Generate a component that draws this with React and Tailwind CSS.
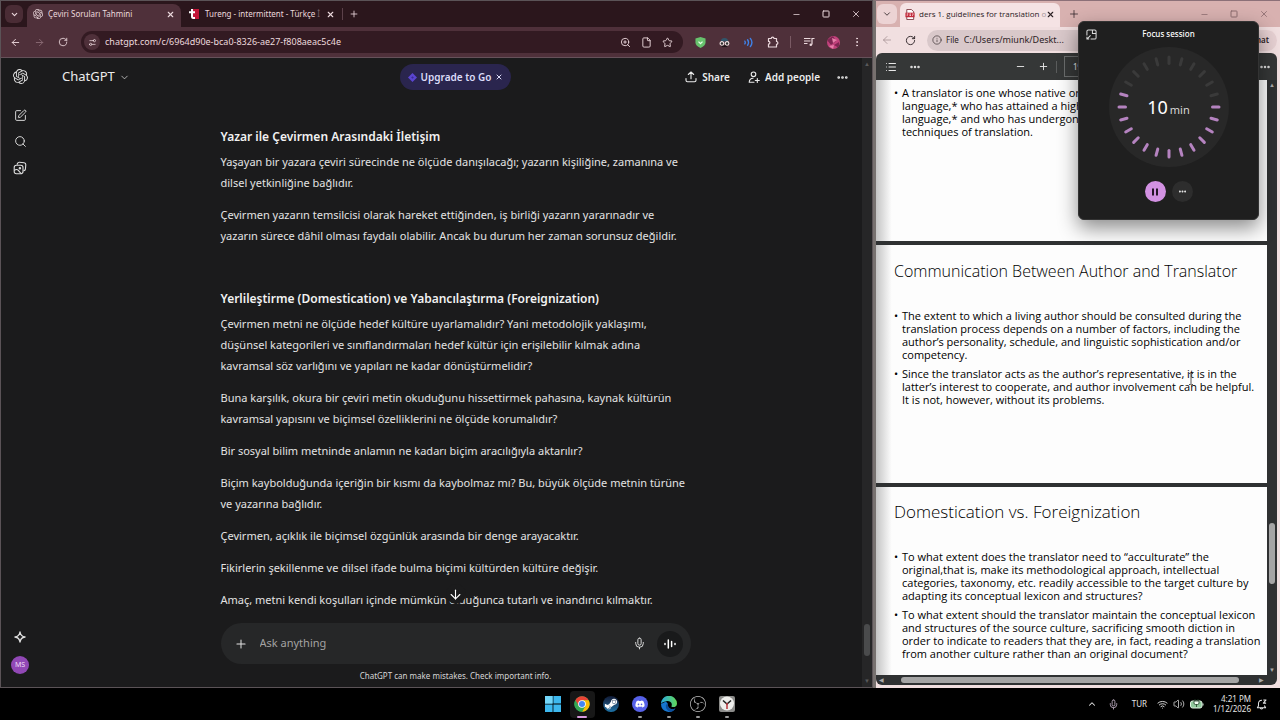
import React, { useState } from 'react';
import {
    ArrowDown, ArrowLeft, ArrowRight, ChevronDown, ChevronUp, Ellipsis, EllipsisVertical,
    File, Info, List, ListMusic, Mic, Minus, Plus, RotateCw, Search, Settings2, SquarePen, Square,
    Star, Volume2, Wifi, X, ZoomIn,
} from 'lucide-react';
import { SiOpenai, SiObsstudio } from 'react-icons/si';
import { FaDiscord, FaSteamSymbol } from 'react-icons/fa';

const sections = [
    {
        title: 'Yazar ile Çevirmen Arasındaki İletişim',
        paragraphs: [
            ['Yaşayan bir yazara çeviri sürecinde ne ölçüde danışılacağı; yazarın kişiliğine, zamanına ve', 'dilsel yetkinliğine bağlıdır.'],
            ['Çevirmen yazarın temsilcisi olarak hareket ettiğinden, iş birliği yazarın yararınadır ve', 'yazarın sürece dâhil olması faydalı olabilir. Ancak bu durum her zaman sorunsuz değildir.'],
        ],
    },
    {
        title: 'Yerlileştirme (Domestication) ve Yabancılaştırma (Foreignization)',
        paragraphs: [
            ['Çevirmen metni ne ölçüde hedef kültüre uyarlamalıdır? Yani metodolojik yaklaşımı,', 'düşünsel kategorileri ve sınıflandırmaları hedef kültür için erişilebilir kılmak adına', 'kavramsal söz varlığını ve yapıları ne kadar dönüştürmelidir?'],
            ['Buna karşılık, okura bir çeviri metin okuduğunu hissettirmek pahasına, kaynak kültürün', 'kavramsal yapısını ve biçimsel özelliklerini ne ölçüde korumalıdır?'],
            ['Bir sosyal bilim metninde anlamın ne kadarı biçim aracılığıyla aktarılır?'],
            ['Biçim kaybolduğunda içeriğin bir kısmı da kaybolmaz mı? Bu, büyük ölçüde metnin türüne', 've yazarına bağlıdır.'],
            ['Çevirmen, açıklık ile biçimsel özgünlük arasında bir denge arayacaktır.'],
            ['Fikirlerin şekillenme ve dilsel ifade bulma biçimi kültürden kültüre değişir.'],
            ['Amaç, metni kendi koşulları içinde mümkün olduğunca tutarlı ve inandırıcı kılmaktır.'],
        ],
    },
];

const slideOne = [
    ['A translator is one whose native or', 'language,* who has attained a high', 'language,* and who has undergone', 'techniques of translation.'],
];

const slideTwo = [
    ['The extent to which a living author should be consulted during the', 'translation process depends on a number of factors, including the', 'author’s personality, schedule, and linguistic sophistication and/or', 'competency.'],
    ['Since the translator acts as the author’s representative, it is in the', 'latter’s interest to cooperate, and author involvement can be helpful.', 'It is not, however, without its problems.'],
];

const slideThree = [
    ['To what extent does the translator need to “acculturate” the', 'original,that is, make its methodological approach, intellectual', 'categories, taxonomy, etc. readily accessible to the target culture by', 'adapting its conceptual lexicon and structures?'],
    ['To what extent should the translator maintain the conceptual lexicon', 'and structures of the source culture, sacrificing smooth diction in', 'order to indicate to readers that they are, in fact, reading a translation', 'from another culture rather than an original document?'],
];

function Lines({ lines }) {
    return lines.map((line, i) => (
        <React.Fragment key={i}>
            {i > 0 && <br />}
            {line}
        </React.Fragment>
    ));
}

function IconButton({ label, className = '', onClick, children }) {
    return (
        <button type="button" aria-label={label} onClick={onClick} className={`flex shrink-0 items-center justify-center ${className}`}>
            {children}
        </button>
    );
}

function WindowButtons({ className }) {
    return (
        <div className={`flex items-center gap-5 ${className}`}>
            <IconButton label="Minimize" className="w-[10px]"><Minus size={9} /></IconButton>
            <IconButton label="Maximize" className="w-[10px]"><Square size={8} strokeWidth={3} /></IconButton>
            <IconButton label="Close" className="w-[10px]"><X size={10} /></IconButton>
        </div>
    );
}

function ChromeTabs() {
    return (
        <div className="flex h-[26px] shrink-0 items-center bg-[#2b161c] pr-[11px] pl-1 text-[#ecd9dd]">
            <IconButton label="Search tabs" className="mr-1 size-[18px] rounded-md bg-[#4a2c35]"><ChevronDown size={9} strokeWidth={3} /></IconButton>
            <div className="mt-[3px] flex h-[23px] w-[154px] items-center rounded-t-lg bg-[#4f303a] px-1.5 pb-[3px]">
                <SiOpenai size={10} className="shrink-0" />
                <span className="ml-[5px] flex-1 text-[8px] whitespace-nowrap">Çeviri Soruları Tahmini</span>
                <IconButton label="Close tab"><X size={9} strokeWidth={3} /></IconButton>
            </div>
            <div className="flex w-[154px] items-center pl-2">
                <svg viewBox="0 0 10 10" className="size-[10px] shrink-0">
                    <rect x="3" width="7" height="10" fill="#c21638" />
                    <path d="M3 0v7.500q0 1.500 1.500 1.500H6M0 3.200h6" stroke="#fff" strokeWidth="2" fill="none" />
                </svg>
                <span className="ml-[6px] flex-1 text-[8px] whitespace-nowrap">Tureng - intermittent - Türkçe <span className="text-[#7a6067]">İ</span></span>
                <IconButton label="Close tab"><X size={9} strokeWidth={3} /></IconButton>
            </div>
            <span className="ml-[7px] h-3 w-px bg-[#5c414a]" />
            <IconButton label="New tab" className="ml-[6px]"><Plus size={10} /></IconButton>
            <WindowButtons className="ml-auto" />
        </div>
    );
}

function ChromeToolbar() {
    return (
        <div className="flex h-[31px] shrink-0 items-center border-b border-[#66515a] bg-[#4f303a] pr-[9px] pl-[9px] text-[#ecd9dd]">
            <IconButton label="Back"><ArrowLeft size={11} /></IconButton>
            <IconButton label="Forward" className="ml-[13px] text-[#8a6a74]"><ArrowRight size={11} /></IconButton>
            <IconButton label="Reload" className="ml-[13px]"><RotateCw size={10} /></IconButton>
            <div className="ml-[13px] flex h-[22px] flex-1 items-center rounded-full bg-[#331a22] pr-[10px] pl-[3px]">
                <IconButton label="Site information" className="size-4 rounded-full bg-[#4f303a]"><Settings2 size={9} className="-scale-x-100" /></IconButton>
                <input aria-label="Address" className="ml-[5px] min-w-0 flex-1 text-[9px] outline-none" defaultValue="chatgpt.com/c/6964d90e-bca0-8326-ae27-f808aeac5c4e" />
                <div className="flex items-center gap-[10px]">
                    <IconButton label="Zoom"><ZoomIn size={11} /></IconButton>
                    <IconButton label="Page"><File size={11} /></IconButton>
                    <IconButton label="Bookmark"><Star size={11} /></IconButton>
                </div>
            </div>
            <div className="ml-3 flex items-center gap-[13px]">
                <IconButton label="Shield" className="w-[11px]">
                    <svg viewBox="0 0 12 12" className="size-[11px]">
                        <path d="M6 0 11.500 1.500V6q0 3.500-5.500 6Q.5 9.500.5 6V1.500z" fill="#67c26d" />
                        <path d="m3.800 5 2.200 2.200L8.200 5" stroke="#eaffea" strokeWidth="1.400" fill="none" />
                    </svg>
                </IconButton>
                <IconButton label="Glasses" className="w-[11px]">
                    <svg viewBox="0 0 12 12" className="size-[11px]">
                        <path d="M2 5q0-4 4-4t4 4z" fill="#31566b" />
                        <path d="M3 9h6v2H3z" fill="#201418" />
                        <g fill="#333" stroke="#f1e3e3" strokeWidth="1.200"><circle cx="3.200" cy="7" r="2" /><circle cx="8.800" cy="7" r="2" /></g>
                    </svg>
                </IconButton>
                <IconButton label="Read aloud" className="w-[11px]">
                    <svg viewBox="0 0 12 12" className="size-[11px]" fill="none" stroke="#3f82e8" strokeWidth="1.500" strokeLinecap="round">
                        <path d="M2 4.500q1 1.500 0 3M5 3q2 3 0 6M8 1.500q3.500 4.500 0 9" />
                    </svg>
                </IconButton>
                <IconButton label="Extensions" className="w-[12px]">
                    <svg viewBox="0 0 12 12" className="size-[12px]" fill="none" stroke="currentColor" strokeWidth="1.200" strokeLinejoin="round">
                        <path d="M1.500 2.500h2.700a1.400 1.400 0 0 1 2.800 0h2.500v3a1.400 1.400 0 0 1 0 2.800v2.700h-8V8.200a1.400 1.400 0 0 0 0-2.800z" />
                    </svg>
                </IconButton>
            </div>
            <span className="ml-[11px] h-3 w-px bg-[#7a5a64]" />
            <IconButton label="Media" className="ml-[12px]">
                <svg viewBox="0 0 12 12" className="size-[12px]" fill="none" stroke="currentColor" strokeWidth="1.200">
                    <path d="M1 2.500h6.500M1 5h6.500M1 7.500h3.500M9 8.500v-6h2.500" />
                    <circle cx="7.800" cy="8.700" r="1.300" fill="currentColor" stroke="none" />
                </svg>
            </IconButton>
            <IconButton label="Profile" className="ml-3 size-[13px] overflow-hidden rounded-full bg-[#c2427c]">
                <svg viewBox="0 0 13 13"><path d="M0 4 6 0l3 5-5 4zM7 9l5-3v6z" fill="#7f2552" /><path d="m5 2 5 2-4 3zM2 10l5-1-1 4z" fill="#e77fa9" /></svg>
            </IconButton>
            <IconButton label="Menu" className="ml-[11px]"><EllipsisVertical size={12} /></IconButton>
        </div>
    );
}

function Sidebar() {
    return (
        <nav className="flex w-[38px] shrink-0 flex-col items-center text-[#dedede]">
            <a href="#home" aria-label="ChatGPT" className="mt-[11px] flex size-[15px] items-center justify-center"><SiOpenai size={15} /></a>
            <div className="mt-[25px] flex flex-col items-center gap-[13px]">
                <IconButton label="New chat"><SquarePen size={13} strokeWidth={1.75} /></IconButton>
                <IconButton label="Search chats"><Search size={13} strokeWidth={1.75} /></IconButton>
                <IconButton label="Library">
                    <svg viewBox="0 0 14 14" className="size-[14px]" fill="none" stroke="currentColor" strokeWidth="1.100" strokeLinecap="round" strokeLinejoin="round">
                        <path d="M4.200 3.300 4.500 2.500Q5 1.200 6.400 1.300l4.700.5Q12.900 2 12.800 3.700l-.4 4.500q-.2 1.400-1.600 1.600" />
                        <rect x="1.200" y="4.200" width="8.800" height="8.600" rx="2.200" />
                        <path d="M1.500 9.200q2.500-1.800 4.300.7 1.200 1.700 2.500 2.700" />
                        <circle cx="6.900" cy="7.200" r=".7" />
                    </svg>
                </IconButton>
            </div>
            <div className="mt-auto mb-[13px] flex flex-col items-center gap-[13px]">
                <IconButton label="Upgrade plan">
                    <svg viewBox="0 0 12 12" className="size-[12px]" fill="none" stroke="currentColor" strokeWidth="1.400" strokeLinejoin="round">
                        <path d="M6 1q.6 4.400 5 5-4.400.6-5 5-.6-4.400-5-5 4.400-.6 5-5z" />
                    </svg>
                </IconButton>
                <button type="button" className="size-[18px] rounded-full bg-[#9148b5] text-[7px] text-[#f0ddf7]">MS</button>
            </div>
        </nav>
    );
}

function ChatHeader() {
    return (
        <header className="grid h-[38px] shrink-0 grid-cols-[1fr_auto_1fr] items-center px-[23px] font-semibold text-[#ececec]">
            <button type="button" className="flex items-center gap-1 justify-self-start text-[13px] font-normal">
                ChatGPT <ChevronDown size={11} strokeWidth={1.5} />
            </button>
            <div className="flex h-[26px] items-center gap-1 rounded-full bg-[#2a254e] px-2 text-[10px] text-[#dcdcf8]">
                <svg viewBox="0 0 10 10" className="size-[9px]"><path d="M5 0 10 5 5 10 0 5z" fill="#5b45d1" /><path d="m5 3.500 1.500 1.500L5 6.500 3.500 5z" fill="#3a2c96" /></svg>
                <button type="button">Upgrade to Go</button>
                <IconButton label="Dismiss"><X size={8} strokeWidth={3} /></IconButton>
            </div>
            <div className="flex items-center justify-self-end text-[10px]">
                <button type="button" className="flex items-center gap-[5px]">
                    <svg viewBox="0 0 12 12" className="size-[12px]" fill="none" stroke="currentColor" strokeWidth="1.100" strokeLinecap="round" strokeLinejoin="round">
                        <path d="M6 7.800V1M3.300 3.500 6 1l2.700 2.500M1 7.500v1.800q0 1.500 1.500 1.500h7q1.500 0 1.500-1.500V7.500" />
                    </svg>
                    Share
                </button>
                <button type="button" className="ml-[18px] flex items-center gap-[5px]">
                    <svg viewBox="0 0 12 12" className="size-[12px]" fill="none" stroke="currentColor" strokeWidth="1.100" strokeLinecap="round">
                        <circle cx="5.500" cy="3.300" r="2.300" />
                        <path d="M1.200 11.200Q1.500 7.500 5 7.300M1.200 11.200H6M9.300 7.500v4M7.300 9.500h4" />
                    </svg>
                    Add people
                </button>
                <IconButton label="More" className="ml-4"><Ellipsis size={13} strokeWidth={3} /></IconButton>
            </div>
        </header>
    );
}

function Composer() {
    return (
        <div className="shrink-0 text-center">
            <div className="mx-auto flex h-[41px] w-full max-w-[470px] items-center rounded-full bg-[#262728] pr-[8px] pl-[13px] text-[#e4e4e4]">
                <IconButton label="Attach"><Plus size={14} strokeWidth={1.75} /></IconButton>
                <input aria-label="Message" placeholder="Ask anything" className="ml-[12px] min-w-0 flex-1 text-[11px] outline-none placeholder:text-[#a3a3a3]" />
                <IconButton label="Dictate"><Mic size={13} strokeWidth={1.75} /></IconButton>
                <IconButton label="Voice mode" className="ml-[11px] size-[26px] rounded-full bg-[#191a1b]">
                    <svg viewBox="0 0 12 12" className="size-[12px]" stroke="#fff" strokeWidth="1.500" strokeLinecap="round">
                        <path d="M1 5.500v1M4.300 2v8M7.600 3.500v5M11 5.500v1" />
                    </svg>
                </IconButton>
            </div>
            <p className="h-[23px] text-[8px] leading-[23px] text-[#d6d6d6]">ChatGPT can make mistakes. Check important info.</p>
        </div>
    );
}

function ChatWindow() {
    return (
        <section className="flex min-w-0 flex-col overflow-hidden border border-[#5b5357] bg-[#1b1b1c] font-['Noto_Sans',sans-serif]">
            <ChromeTabs />
            <ChromeToolbar />
            <div className="relative flex min-h-0 flex-1">
                <Sidebar />
                <main className="flex min-w-0 flex-1 flex-col">
                    <ChatHeader />
                    <div className="relative min-h-0 flex-1 overflow-hidden">
                        <article className="mx-auto flex max-w-[470px] flex-col pt-[30px] text-[11px] leading-[21px] whitespace-nowrap text-[#e3e3e3]">
                            {sections.map((section) => (
                                <section key={section.title} className="mb-[42px]">
                                    <h3 className="mb-[4px] text-[12px] font-semibold text-[#f1f1f1]">{section.title}</h3>
                                    <div className="flex flex-col gap-[11px]">
                                        {section.paragraphs.map((p) => <p key={p[0]}><Lines lines={p} /></p>)}
                                    </div>
                                </section>
                            ))}
                        </article>
                        <button type="button" aria-label="Scroll to bottom" className="absolute bottom-[19px] left-1/2 flex size-[20px] -translate-x-1/2 items-center justify-center rounded-full bg-[#1b1b1c] text-white">
                            <ArrowDown size={15} strokeWidth={1.75} />
                        </button>
                    </div>
                    <Composer />
                </main>
                <div className="absolute inset-y-0 right-0 flex w-[10px] flex-col items-center bg-[#262627] py-[3px] text-[6px] leading-[6px] text-[#59595a]">
                    <span>▲</span>
                    <span className="mt-auto mb-[22px] h-8 w-[6px] rounded-full bg-[#4a4b4c]" />
                    <span>▼</span>
                </div>
            </div>
        </section>
    );
}

function Slide({ title, items, titleSize = 'text-[16px]', className }) {
    return (
        <article className={`bg-linear-to-r from-[#c4c4c4] via-[#fdfdfd] via-4% to-[#fdfdfd] pl-[18px] whitespace-nowrap text-black ${className}`}>
            {title && <h2 className={`mb-[28px] leading-5 font-light ${titleSize}`}>{title}</h2>}
            <ul className="flex flex-col gap-[6px] text-[11px] leading-[13px]">
                {items.map((lines) => (
                    <li key={lines[0]} className="flex">
                        <span className="w-2 shrink-0">•</span>
                        <span><Lines lines={lines} /></span>
                    </li>
                ))}
            </ul>
        </article>
    );
}

function PdfWindow() {
    return (
        <section className="flex min-w-0 flex-col border-t border-t-[#8c7078] border-l-[3px] border-l-[#77716f] bg-[#f1dfe0] pr-[3px] pb-[3px] font-['Noto_Sans',sans-serif] text-[#2c2225]">
            <div className="-mr-[3px] flex h-[26px] shrink-0 items-center bg-[#d8b1b0] pr-[11px]">
                <IconButton label="Tab actions" className="ml-px size-[20px] rounded-md bg-[#ecd3d4]"><ChevronDown size={10} /></IconButton>
                <div className="mt-[2px] ml-[3px] flex h-6 w-[160px] items-center rounded-t-md bg-[#f5e3e4] px-[5px] pb-[2px]">
                    <svg viewBox="0 0 10 12" className="h-[11px] w-[10px] shrink-0">
                        <path d="M1.500.5h5l2.500 2.500v8.500H1.500z" fill="#fff" stroke="#7d3b43" />
                        <rect y="4" width="10" height="5" fill="#c32b3c" />
                        <path d="M1.500 5.500h1.500M4.500 5.500h1.500M7.500 5.500H9M1.500 7h.8M4.500 7h1.500M7.500 7h.8" stroke="#fff" />
                    </svg>
                    <span className="ml-1 flex-1 font-['Open_Sans',sans-serif] text-[8px] whitespace-nowrap">ders 1. guidelines for translation <span className="text-[#a79799]">o</span></span>
                    <IconButton label="Close tab"><X size={9} strokeWidth={3} /></IconButton>
                </div>
                <IconButton label="New tab" className="ml-2"><Plus size={12} strokeWidth={1.5} /></IconButton>
                <WindowButtons className="ml-auto text-[#8c6c6f]" />
            </div>
            <div className="flex h-[26px] shrink-0 items-center pl-[5px]">
                <IconButton label="Back" className="text-[#a08c8f]"><ArrowLeft size={12} strokeWidth={1.5} /></IconButton>
                <IconButton label="Refresh" className="ml-3"><RotateCw size={11} /></IconButton>
                <div className="ml-[11px] flex h-[21px] flex-1 items-center rounded-full bg-[#d9c8ca] pl-[5px] text-[9px]">
                    <Info size={10} strokeWidth={1.5} />
                    <span className="ml-1 text-[8px]">File</span>
                    <input aria-label="Address" className="ml-[5px] min-w-0 flex-1 outline-none" defaultValue="C:/Users/miunk/Deskt..." />
                </div>
                <button type="button" className="ml-2 flex h-[21px] items-center rounded-full bg-[#e6d0d2] px-2 text-[8px] font-semibold">Chat</button>
            </div>
            <div className="flex h-[27px] shrink-0 items-center rounded-t-md bg-[#353737] pl-[9px] text-[#e8e8e8]">
                <IconButton label="Contents"><List size={12} /></IconButton>
                <IconButton label="Draw" className="ml-3"><Ellipsis size={12} strokeWidth={3} /></IconButton>
                <IconButton label="Zoom out" className="ml-[94px]"><Minus size={11} /></IconButton>
                <IconButton label="Zoom in" className="ml-[12px]"><Plus size={11} /></IconButton>
                <span className="mx-[7px] h-3 w-px bg-[#5b5d5d]" />
                <input aria-label="Page" className="mr-1 h-[21px] w-8 border border-[#6a6c6c] pl-2 text-[8px]" defaultValue="19" />
                <IconButton label="More" className="mr-[6px] ml-auto"><Ellipsis size={12} strokeWidth={3} /></IconButton>
            </div>
            <div className="flex min-h-0 flex-1 overflow-hidden bg-[#2f3132]">
                <div className="flex min-w-0 flex-1 flex-col gap-[4px] overflow-hidden font-['Open_Sans',sans-serif]">
                    <Slide items={slideOne} className="h-[161px] shrink-0 pt-[6px]" />
                    <Slide title="Communication Between Author and Translator" items={slideTwo} className="h-[238px] shrink-0 pt-[16px]" />
                    <Slide title="Domestication vs. Foreignization" titleSize="text-[17px]" items={slideThree} className="flex-1 pt-[15px]" />
                </div>
                <div className="flex w-[10px] flex-col items-center py-[2px] text-[6px] leading-[6px] text-[#a9a9a9]">
                    <span>▲</span>
                    <span className="mt-auto mb-[83px] h-[61px] w-[6px] rounded-full bg-[#a5a5a5]" />
                    <span>▼</span>
                </div>
            </div>
            <div className="flex h-[10px] shrink-0 items-center rounded-b-md bg-[#2f3132] pr-[13px] pl-[3px] text-[6px] leading-[6px] text-[#a9a9a9]">
                <span>◀</span>
                <span className="mr-[20px] ml-[17px] h-[6px] flex-1 rounded-full bg-[#a5a5a5]" />
                <span>▶</span>
            </div>
        </section>
    );
}

function FocusSession() {
    const [paused, setPaused] = useState(false);
    const ticks = Array.from({ length: 24 }, (_, i) => i);
    return (
        <aside className="absolute top-[21px] right-[21px] flex h-[199px] w-[181px] flex-col items-center rounded-md border border-[#333] bg-[#1f1f1f] font-['Noto_Sans',sans-serif] text-white shadow-[0_8px_20px_rgba(0,0,0,0.45)]">
            <div className="grid w-full grid-cols-[1fr_auto_1fr] items-center px-[7px] pt-[6px] text-[8px] leading-3 font-medium">
                <IconButton label="Back to full view" className="justify-self-start">
                    <svg viewBox="0 0 12 12" className="size-[11px]" fill="none" stroke="#ddd" strokeWidth="1.100">
                        <path d="M1 7V2.500Q1 1 2.500 1h7Q11 1 11 2.500v7Q11 11 9.500 11H5M7 1v4h4M5 7 1 11M1 8.500V11h2.500" />
                    </svg>
                </IconButton>
                <h2>Focus session</h2>
            </div>
            <div className="relative mt-[7px] flex size-[120px] items-center justify-center rounded-full bg-[#282828]">
                <svg viewBox="-60 -60 120 120" className="absolute inset-0" strokeWidth="3" strokeLinecap="round">
                    {ticks.map((i) => (
                        <path key={i} d="M0 -43.500V-50" transform={`rotate(${i * 15})`} stroke={i >= 6 && i <= 19 ? '#b583c0' : '#3a3a3a'} />
                    ))}
                </svg>
                <p className="flex items-baseline gap-[2px] text-[18px]">10<span className="text-[11px] text-[#d8d8d8]">min</span></p>
            </div>
            <div className="mt-[14px] flex gap-[6px]">
                <IconButton label={paused ? 'Resume' : 'Pause'} onClick={() => setPaused(!paused)} className="size-[21px] rounded-full bg-[#d291e2]">
                    <svg viewBox="0 0 8 8" className="size-2" fill="#241528"><path d={paused ? 'M1 .5 7.500 4 1 7.500z' : 'M1 .5h2v7H1zM5 .5h2v7H5z'} /></svg>
                </IconButton>
                <IconButton label="More options" className="size-[21px] rounded-full bg-[#2d2d2d]"><Ellipsis size={9} strokeWidth={3} /></IconButton>
            </div>
        </aside>
    );
}

function WindowsLogo() {
    return (
        <svg viewBox="0 0 16 16" className="size-4">
            <path d="M0 0h7.600v7.600H0zM8.400 0H16v7.600H8.400zM0 8.400h7.600V16H0zM8.400 8.400H16V16H8.400z" fill="#3db8ee" />
            <path d="M0 0h7.600v7.600H0z" fill="#73d6f8" />
        </svg>
    );
}

function ChromeLogo() {
    return (
        <svg viewBox="0 0 48 48" className="size-4">
            <circle cx="24" cy="24" r="23" fill="#34a853" />
            <path d="M4.100 12.500A23 23 0 0 1 43.900 12.500H24L14 30z" fill="#ea4335" />
            <path d="M43.900 12.500A23 23 0 0 1 24 47L34 29.800 24 12.500z" fill="#fbbc05" />
            <path d="M24 47A23 23 0 0 1 4.100 12.500L14 29.800 24 35.500 34 29.800z" fill="#34a853" />
            <circle cx="24" cy="24" r="11.500" fill="#fff" />
            <circle cx="24" cy="24" r="9" fill="#4285f4" />
        </svg>
    );
}

function EdgeLogo() {
    return (
        <svg viewBox="0 0 16 16" className="size-4">
            <defs>
                <linearGradient id="edge-top" x1="0" x2="1"><stop offset="0" stopColor="#28a8e0" /><stop offset="1" stopColor="#62d957" /></linearGradient>
            </defs>
            <path d="M0 8a8 8 0 0 0 14.500 4.600q-3.500 1.600-6-.3Q6 10.500 7 8L5 5.500z" fill="#1676cf" />
            <path d="M4.800 9.500q-.3 4.500 4.500 6.400a8 8 0 0 0 5.200-3.300q-3.500 1.600-6-.3Q6.300 10.500 7 8 5 7.500 4.800 9.500z" fill="#0d4f9c" />
            <path d="M0 8a8 8 0 0 1 16-.5c0 3-2.700 4-4.700 3.500-1.300-.4-.8-1-.5-1.800C11.200 6.500 8.500 4.700 5.300 5.200 2.500 5.700.8 6.500 0 8z" fill="url(#edge-top)" />
        </svg>
    );
}

function ClockLogo() {
    return (
        <svg viewBox="0 0 16 16" className="size-4">
            <rect width="16" height="16" rx="2" fill="#8b8b89" />
            <circle cx="8" cy="7.500" r="7" fill="#eeeeec" />
            <path d="M4 4.500 8 8l4-3.500" stroke="#222" strokeWidth="1.600" fill="none" />
            <path d="M8 7v6" stroke="#b8333b" strokeWidth="1.500" />
        </svg>
    );
}

const apps = [
    { name: 'Start', icon: <WindowsLogo />, mark: 'bg-transparent' },
    { name: 'Google Chrome', icon: <ChromeLogo />, mark: 'w-[10px] bg-[#d99ae0]', tile: 'bg-[#171717]' },
    { name: 'Steam', icon: <span className="flex size-4 items-center justify-center rounded-full bg-linear-to-b from-[#101a35] to-[#1c74a8]"><FaSteamSymbol size={14} color="#fff" /></span>, mark: 'bg-transparent' },
    { name: 'Discord', icon: <span className="flex size-4 items-center justify-center rounded-full bg-[#5661e8]"><FaDiscord size={10} color="#fff" /></span>, mark: 'w-1 bg-[#9a9a9a]' },
    { name: 'Microsoft Edge', icon: <EdgeLogo />, mark: 'w-1 bg-[#9a9a9a]' },
    { name: 'OBS Studio', icon: <SiObsstudio size={16} color="#bdbdbd" />, mark: 'w-1 bg-[#9a9a9a]' },
    { name: 'Clock', icon: <ClockLogo />, mark: 'w-1 bg-[#9a9a9a]' },
];

function Taskbar() {
    return (
        <footer className="grid h-8 shrink-0 grid-cols-[1fr_auto_1fr] items-center bg-black font-['Noto_Sans',sans-serif] text-[8px] text-[#e6e6e6]">
            <nav className="col-start-2 flex gap-[4px]">
                {apps.map((app) => (
                    <button key={app.name} type="button" aria-label={app.name} className={`flex h-[27px] w-[25px] flex-col items-center justify-end gap-[4px] rounded ${app.tile || ''}`}>
                        {app.icon}
                        <span className={`h-[2px] rounded-full ${app.mark}`} />
                    </button>
                ))}
            </nav>
            <div className="flex items-center justify-self-end pr-[13px]">
                <IconButton label="Show hidden icons"><ChevronUp size={10} strokeWidth={2.5} /></IconButton>
                <IconButton label="Microphone" className="ml-[11px] text-[#b9a9bb]"><Mic size={11} /></IconButton>
                <button type="button" className="mr-[10px] ml-[13px]">TUR</button>
                <div className="flex items-center gap-[5px]">
                    <Wifi size={11} />
                    <Volume2 size={12} strokeWidth={1.5} />
                    <svg viewBox="0 0 14 12" className="h-[12px] w-[14px]">
                        <rect x=".5" y="3" width="11.500" height="7" rx="2" fill="#8fc79b" stroke="#dff2e2" />
                        <path d="M12.500 5.500h1v2h-1z" fill="#dff2e2" />
                        <path d="M5 1v2M8 1v2M4 3h5v2q0 1.500-1.500 1.500h-2Q4 6.500 4 5zM6.500 6.500V9" fill="#f4fff5" stroke="#1d3a23" strokeWidth=".8" />
                    </svg>
                </div>
                <time className="ml-[9px] text-right leading-[10px]">4:21 PM<br />1/12/2026</time>
                <IconButton label="Notifications" className="ml-[5px]">
                    <svg viewBox="0 0 12 12" className="size-[11px]" fill="none" stroke="currentColor" strokeWidth="1.100" strokeLinejoin="round">
                        <path d="M6.500 1.500Q2.800 1.300 2.700 5v2.500L1.500 9.500h9L9.300 7.500V7M4.500 9.500q.2 1.500 1.500 1.500t1.500-1.500M8 1h3L8 4.500h3" />
                    </svg>
                </IconButton>
            </div>
        </footer>
    );
}

export default function App() {
    return (
        <div className="relative flex h-screen flex-col overflow-hidden bg-black">
            <div className="grid min-h-0 flex-1 grid-cols-[873fr_407fr] grid-rows-1">
                <ChatWindow />
                <PdfWindow />
            </div>
            <Taskbar />
            <FocusSession />
            {/* text cursor */}
            <svg viewBox="0 0 6 12" className="absolute top-[373px] left-[1188px] h-3 w-[6px]" fill="none" stroke="#555">
                <path d="M1 .5h1.500L3 1l.5-.5H5M3 1v10M1 11.500h1.500L3 11l.5.5H5" />
            </svg>
        </div>
    );
}
